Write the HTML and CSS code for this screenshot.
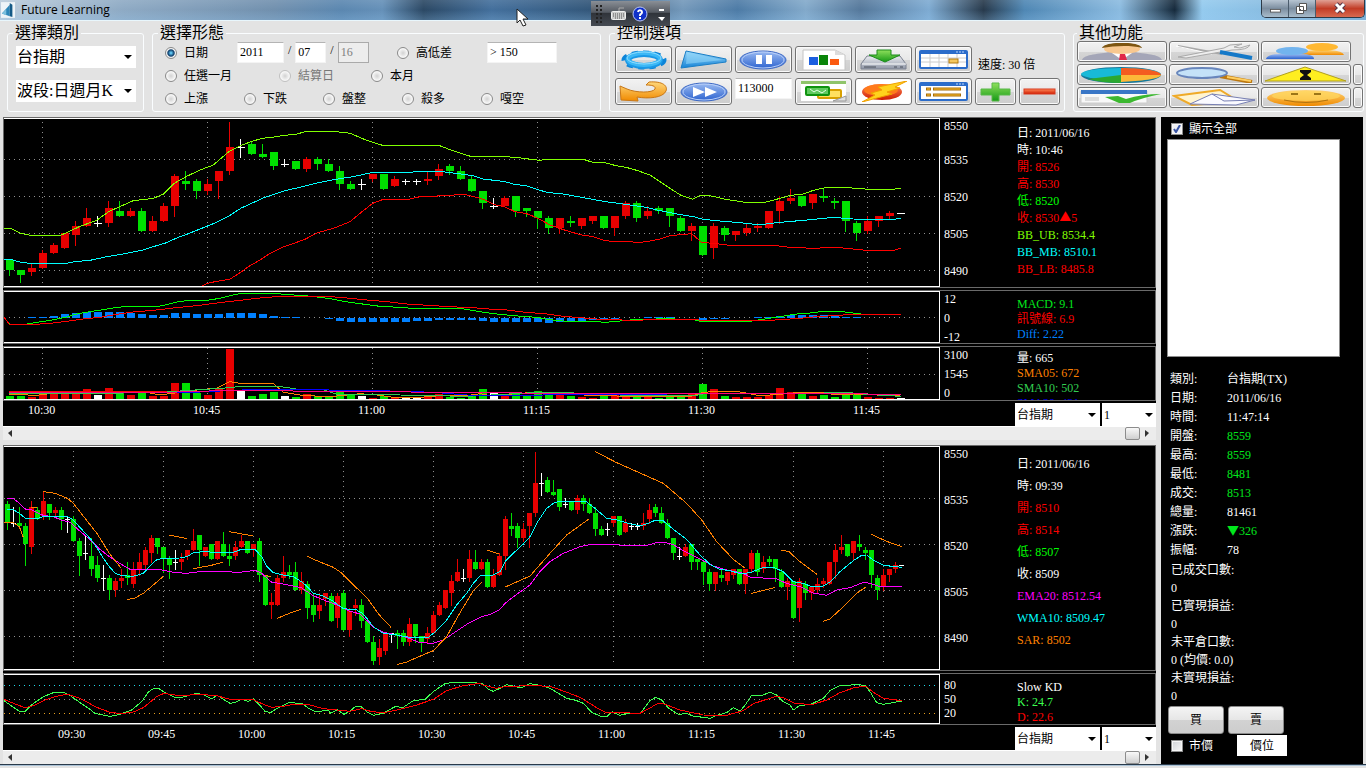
FILE: index.html
```html
<!DOCTYPE html>
<html lang="zh-Hant">
<head>
    <meta charset="UTF-8">
    <title>Future Learning</title>
    <link rel="stylesheet" href="styles.css">
</head>
<body>
<svg class="defs" width="0" height="0" aria-hidden="true">
    <defs>
        <linearGradient id="blue" x1="0" y1="0" x2="0" y2="1"><stop offset="0" stop-color="#9cd8fb"/><stop offset="1" stop-color="#1583d6"/></linearGradient>
        <linearGradient id="royal" x1="0" y1="0" x2="0" y2="1"><stop offset="0" stop-color="#9dbcf2"/><stop offset="1" stop-color="#2b62cf"/></linearGradient>
        <linearGradient id="orange" x1="0" y1="0" x2="0" y2="1"><stop offset="0" stop-color="#ffd77a"/><stop offset="1" stop-color="#f08a00"/></linearGradient>
        <linearGradient id="green" x1="0" y1="0" x2="0" y2="1"><stop offset="0" stop-color="#8fe05c"/><stop offset="1" stop-color="#169a16"/></linearGradient>
        <linearGradient id="red" x1="0" y1="0" x2="0" y2="1"><stop offset="0" stop-color="#ff8a5a"/><stop offset="1" stop-color="#cf1c00"/></linearGradient>
        <linearGradient id="steel" x1="0" y1="0" x2="0" y2="1"><stop offset="0" stop-color="#eceef2"/><stop offset="1" stop-color="#8f96a6"/></linearGradient>
    </defs>
</svg>

<header class="titlebar">
    <svg class="app-icon" viewBox="0 0 16 18"><rect width="16" height="18" fill="#eef4f8"/><path d="M1 13 L10 3 V16 Z" fill="#2c86b8"/><path d="M10 1 L13 3 V17 L10 16 Z" fill="#155a86"/><path d="M1 13 L6 8 V15 Z" fill="#7cc0de"/></svg>
    <h1>Future Learning</h1>
    <div class="window-buttons">
        <button class="win" aria-label="minimize"><svg viewBox="0 0 29 17"><rect x="9.500" y="9.500" width="11" height="3" fill="#fff" stroke="#555"/></svg></button>
        <button class="win" aria-label="restore"><svg viewBox="0 0 26 17"><path d="M10.500 3.500h7v7h-7z M7.500 6.500h7v7h-7z" fill="#fff" stroke="#555"/><rect x="10" y="9" width="2" height="2" fill="#555"/></svg></button>
        <button class="win close" aria-label="close"><svg viewBox="0 0 48 17"><path d="M20 4 L28 12 M28 4 L20 12" stroke="#534" stroke-width="5"/><path d="M20 4 L28 12 M28 4 L20 12" stroke="#fff" stroke-width="3"/></svg></button>
    </div>
    <div class="langbar">
        <svg viewBox="0 0 79 25">
            <g stroke="#222" stroke-width="2" stroke-dasharray="2 2"><path d="M5 5h8M5 9h8M5 13h8M5 17h8M5 21h8"/></g>
            <rect x="20.500" y="10.500" width="14" height="8" rx="1" fill="#ccc" stroke="#eee"/>
            <path d="M22 13h11M22 15h11M24 17h7" stroke="#555" stroke-dasharray="1 1"/><path d="M28 10V7h5" stroke="#aaa" fill="none"/>
            <circle cx="49" cy="13" r="7" fill="#1030c8" stroke="#b8c4f4"/>
            <path d="M47 11 a2 2 0 1 1 3 2 q-1 0 -1 2 M49 16v2" stroke="#fff" stroke-width="2" fill="none"/>
            <path d="M68 8h5v2h-5z M67 16h7l-3 4z" fill="#fff"/>
        </svg>
    </div>
    <svg class="pointer" viewBox="0 0 13 19"><path d="M1 1V15L4 12L7 18L10 17L7 11H12Z" fill="#fff" stroke="#222"/></svg>
</header>

<form class="toolbar">
    <fieldset class="category">
        <legend>選擇類別</legend>
        <select aria-label="類別"><option>台指期</option></select>
        <select aria-label="波段"><option>波段:日週月K</option></select>
    </fieldset>

    <fieldset class="pattern">
        <legend>選擇形態</legend>
        <div class="row row-date">
            <label><input type="radio" name="mode" checked>日期</label>
            <div class="date">
                <input type="text" class="year" value="2011" aria-label="年"><span>/</span>
                <input type="text" value="07" aria-label="月"><span>/</span>
                <input type="text" value="16" aria-label="日" disabled>
            </div>
            <label><input type="radio" name="mode">高低差</label>
            <input type="text" value="&gt; 150" aria-label="高低差">
        </div>
        <div class="row row-month">
            <label><input type="radio" name="mode">任選一月</label>
            <label class="off"><input type="radio" name="mode" disabled>結算日</label>
            <label><input type="radio" name="mode">本月</label>
        </div>
        <div class="row row-trend">
            <label><input type="radio" name="mode">上漲</label>
            <label><input type="radio" name="mode">下跌</label>
            <label><input type="radio" name="mode">盤整</label>
            <label><input type="radio" name="mode">殺多</label>
            <label><input type="radio" name="mode">嘎空</label>
        </div>
    </fieldset>

    <fieldset class="control">
        <legend>控制選項</legend>
        <div class="control-grid">
            <button type="button" aria-label="設定"><svg viewBox="0 0 51 21"><ellipse cx="26" cy="11" rx="20" ry="7" fill="none" stroke="#0c84d8" stroke-width="5" stroke-dasharray="6 5"/><ellipse cx="26" cy="11" rx="16" ry="6" fill="none" stroke="#1a98e6" stroke-width="6"/><ellipse cx="26" cy="10" rx="16" ry="6" fill="none" stroke="#3cb8f6" stroke-width="4"/><ellipse cx="26" cy="9" rx="17" ry="6" fill="none" stroke="#8cdcff" stroke-width="1"/></svg></button>
            <button type="button" aria-label="播放"><svg viewBox="0 0 51 21"><path d="M8 2 L48 10 V13 L3 19 Z" fill="url(#blue)" stroke="#1b7fc6"/><path d="M9 3 L45 11 L8 15 Z" fill="#8fd6f8" opacity=".6"/></svg></button>
            <button type="button" aria-label="暫停"><svg viewBox="0 0 51 21"><ellipse cx="25" cy="11" rx="23" ry="9" fill="url(#royal)" stroke="#3c68c4"/><ellipse cx="25" cy="11" rx="21" ry="8" fill="none" stroke="#b9cff8"/><path d="M18 6h6v9h-6zM28 6h6v9h-6z" fill="#fff"/></svg></button>
            <button type="button" aria-label="統計"><svg viewBox="0 0 51 21"><path d="M5 1h32l10 5v15H5z" fill="#fff" stroke="#c4c4c4"/><path d="M37 1v5h10z" fill="#ddd"/><rect x="11" y="8" width="9" height="8" fill="#1c5fe0"/><rect x="21" y="6" width="9" height="10" fill="#0a850a"/><rect x="32" y="10" width="9" height="6" fill="#fb5a10"/></svg></button>
            <button type="button" aria-label="下載"><svg viewBox="0 0 51 21"><path d="M9 7h33l6 8v5H3v-5z" fill="url(#steel)" stroke="#7c8290"/><path d="M4 15h44" stroke="#fff"/><path d="M6 18h12M36 18h3M42 18h3" stroke="#4a505c"/><path d="M19 1h14v5h9L27 13L11 6h8z" fill="url(#green)" stroke="#1c8c1c"/></svg></button>
            <button type="button" aria-label="日曆"><svg viewBox="0 0 51 21"><rect x="1" y="1" width="49" height="19" rx="2" fill="#2b6cca"/><path d="M3 5h45v13H3z" fill="#fff"/><path d="M3 9h45M3 13h45M12 5v13M21 5v13M30 5v13M39 5v13" stroke="#ccc"/><rect x="31" y="10" width="9" height="4" fill="#f4c860" stroke="#b27a10"/><path d="M38 3h8" stroke="#bcd6fa" stroke-dasharray="2 1"/></svg></button>
            <span class="speed">速度: 30 倍</span>
            <button type="button" aria-label="返回"><svg viewBox="0 0 51 21"><path d="M2 5L9 8C18 12 35 12 37 8C38 5 34 4 28 4L31 1C45 0 50 5 48 10C45 17 30 18 19 16L20 20L3 19Z" fill="url(#orange)" stroke="#c87818"/></svg></button>
            <button type="button" aria-label="快轉"><svg viewBox="0 0 51 21"><ellipse cx="26" cy="11" rx="23" ry="9" fill="url(#royal)" stroke="#3c68c4"/><ellipse cx="26" cy="11" rx="21" ry="8" fill="none" stroke="#b9cff8"/><path d="M15 6l12 5l-12 5zM27 6l12 5l-12 5z" fill="#fff"/></svg></button>
            <input type="text" value="113000" aria-label="時間">
            <button type="button" aria-label="視窗"><svg viewBox="0 0 51 21"><path d="M3 0h45v20H3z" fill="#fff"/><path d="M3 0h45v3H3z" fill="#8fc46a"/><rect x="20" y="9" width="23" height="8" rx="1" fill="#ffe060" stroke="#d8a000" stroke-width="2"/><rect x="8" y="6" width="23" height="8" rx="1" fill="#5fca5f" stroke="#0f930f" stroke-width="2"/><path d="M12 8l4 3l3-2l5 3l4-3" stroke="#e4ffe4" fill="none"/><path d="M35 20l13-5v5z" fill="#e0e0e0" stroke="#999"/></svg></button>
            <button type="button" class="white" aria-label="閃電"><svg viewBox="0 0 51 21"><ellipse cx="24" cy="11" rx="20" ry="8" fill="url(#red)"/><ellipse cx="23" cy="9" rx="17" ry="6" fill="#ff7a1c"/><path d="M49 0L20 6L24 9L13 12L17 14L4 21L34 13L29 11L42 7L37 6Z" fill="#ffd21c" stroke="#f0a000"/></svg></button>
            <button type="button" aria-label="清單"><svg viewBox="0 0 51 21"><rect x="1" y="1" width="49" height="19" rx="2" fill="#2b6cca"/><path d="M3 5h45v13H3z" fill="#fff"/><path d="M8 8h5M8 14h5M15 8h28M15 14h28" stroke="#a86c08" stroke-width="3"/><path d="M9 8h3M9 14h3M16 8h26M16 14h26" stroke="#fcc030"/><path d="M38 3h8" stroke="#bcd6fa" stroke-dasharray="2 1"/></svg></button>
            <button type="button" aria-label="加速"><svg viewBox="0 0 35 21"><path d="M14 2h7v6h11v6h-11v6h-7v-6H3v-6h11z" fill="url(#green)" stroke="#58b848"/></svg></button>
            <button type="button" aria-label="減速"><svg viewBox="0 0 35 21"><rect x="2" y="8" width="31" height="5" fill="url(#red)" stroke="#d83a20"/></svg></button>
        </div>
    </fieldset>

    <fieldset class="others">
        <legend>其他功能</legend>
        <div class="others-grid">
            <button type="button" aria-label="使用者"><svg viewBox="0 0 84 17"><path d="M2 17C4 11 20 11 30 9H54C64 11 80 11 82 17Z" fill="#a4a6b8"/><path d="M32 10h20l-10 7z" fill="#fff"/><path d="M40 11h5l2 6h-8z" fill="#e02848"/><ellipse cx="42" cy="6" rx="18" ry="5" fill="#f8c890"/><path d="M22 5C24 -2 60 -2 62 5C50 2 34 3 22 5Z" fill="#7e5612"/></svg></button>
            <button type="button" aria-label="工具"><svg viewBox="0 0 84 17"><path d="M6 3L50 11" stroke="#a9a9a9" stroke-width="2"/><path d="M4 3L40 11" stroke="#fff"/><path d="M6 14L52 5L58 2L70 1L62 4L68 5L78 2Q76 7 60 7L14 15Z" fill="#eee" stroke="#aaa"/><path d="M48 9L80 15" stroke="#1579c8" stroke-width="4"/></svg></button>
            <button type="button" aria-label="群組"><svg viewBox="0 0 84 17"><path d="M35 12Q36 8 50 7H66Q79 8 80 12Z" fill="url(#orange)"/><ellipse cx="58" cy="4" rx="16" ry="4" fill="#ffb832"/><path d="M2 16Q3 11 17 11H36Q50 11 50 16Z" fill="url(#royal)"/><ellipse cx="28" cy="8" rx="16" ry="4" fill="#72b4ee"/></svg></button>
            <span></span>
            <button type="button" aria-label="圓餅圖"><svg viewBox="0 0 84 17"><ellipse cx="41" cy="9" rx="40" ry="8" fill="#14789a"/><ellipse cx="41" cy="8" rx="40" ry="6" fill="#18bad8"/><path d="M41 2C65 2 81 5 81 9H41Z" fill="#f45c20"/><path d="M41 9H81C80 13 60 15 41 16Z" fill="#fcb838"/><path d="M41 17V9L8 13Q22 17 41 17Z" fill="#2ca830"/></svg></button>
            <button type="button" aria-label="搜尋"><svg viewBox="0 0 84 17"><path d="M48 10L80 16" stroke="#bc7810" stroke-width="4"/><path d="M55 11L79 15" stroke="#ffce60" stroke-width="2"/><ellipse cx="30" cy="7" rx="25" ry="5" fill="#c4e2f8" stroke="#6886bc" stroke-width="2"/></svg></button>
            <button type="button" aria-label="警告"><svg viewBox="0 0 84 17"><path d="M41 1L82 15H1Z" fill="#ffee20" stroke="#b0a020"/><path d="M36 4h11v2l-4 3l4 3v2H36v-2l4-3l-4-3z" fill="#111"/></svg></button>
            <button type="button" aria-label="更多一"></button>
            <button type="button" aria-label="行程"><svg viewBox="0 0 84 17"><path d="M1 2h66v12H1z" fill="#f8f8f8" stroke="#ccc"/><path d="M1 1h66v4H1z" fill="#3976c6"/><path d="M5 8h14v4H5z" fill="#ddd"/><path d="M25 8L38 7L46 10Q62 5 81 5Q61 9 50 14H39Z" fill="#3cb830"/></svg></button>
            <button type="button" aria-label="郵件"><svg viewBox="0 0 84 17"><path d="M2 7L48 1L66 12L20 16Z" fill="#fff4d0" stroke="#efaa28" stroke-width="2"/><path d="M18 15L40 5L83 11L64 16Z" fill="#fafaff" stroke="#7880b4"/><path d="M40 5L52 12L83 11" fill="none" stroke="#7880b4"/></svg></button>
            <button type="button" aria-label="笑臉"><svg viewBox="0 0 84 17"><ellipse cx="42" cy="9" rx="39" ry="8" fill="url(#orange)"/><ellipse cx="42" cy="7" rx="34" ry="5" fill="#ffd860" opacity=".7"/><path d="M27 5h7M50 5h7" stroke="#9c7618" stroke-width="2"/><path d="M20 11Q42 16 64 11" fill="none" stroke="#b07410"/></svg></button>
            <button type="button" aria-label="更多二"></button>
        </div>
    </fieldset>
</form>

<main>
    <div class="charts">
        <section class="chart-block">
            <div class="pane price">
                <svg id="price" class="plot" viewBox="12 12 2805 501" preserveAspectRatio="none"></svg>
                <ol class="scale"><li>8550</li><li>8535</li><li>8520</li><li>8505</li><li>8490</li></ol>
                <ul class="values">
                    <li>日: 2011/06/16</li>
                    <li>時: 10:46</li>
                    <li class="red">開: 8526</li>
                    <li class="red">高: 8530</li>
                    <li class="lime">低: 8520</li>
                    <li class="red">收: 8530<span class="mark">▲</span>5</li>
                    <li class="chartreuse">BB_UB: 8534.4</li>
                    <li class="cyan">BB_MB: 8510.1</li>
                    <li class="red">BB_LB: 8485.8</li>
                </ul>
            </div>
            <div class="pane macd">
                <svg id="macd" class="plot" viewBox="12 21 2805 150" preserveAspectRatio="none"></svg>
                <ol class="scale"><li>12</li><li>0</li><li>-12</li></ol>
                <ul class="values">
                    <li class="green">MACD: 9.1</li>
                    <li class="red">訊號線: 6.9</li>
                    <li class="blue">Diff: 2.22</li>
                </ul>
            </div>
            <div class="pane volume">
                <svg id="volume" class="plot" viewBox="12 189 2805 153" preserveAspectRatio="none"></svg>
                <ol class="scale"><li>3100</li><li>1545</li><li>0</li></ol>
                <ul class="values">
                    <li>量: 665</li>
                    <li class="orange">SMA05: 672</li>
                    <li class="sea">SMA10: 502</li>
                    <li class="deep">SMA20: 431</li>
                </ul>
            </div>
            <div class="axis">
                <ol class="times wide"><li>10:30</li><li>10:45</li><li>11:00</li><li>11:15</li><li>11:30</li><li>11:45</li></ol>
                <select aria-label="商品"><option>台指期</option></select>
                <select class="period" aria-label="週期"><option>1</option></select>
            </div>
            <div class="scroller">
                <button aria-label="向左"><svg viewBox="0 0 5 7"><path d="M4 0V7L0 3Z"/></svg></button>
                <input type="range" value="100" aria-label="捲動">
                <button aria-label="向右"><svg viewBox="0 0 5 7"><path d="M0 0V7L4 3Z"/></svg></button>
            </div>
        </section>

        <section class="chart-block">
            <div class="pane day">
                <svg id="day" class="plot" viewBox="12 21 2805 666" preserveAspectRatio="none"></svg>
                <ol class="scale"><li>8550</li><li>8535</li><li>8520</li><li>8505</li><li>8490</li></ol>
                <ul class="values">
                    <li>日: 2011/06/16</li>
                    <li>時: 09:39</li>
                    <li class="red">開: 8510</li>
                    <li class="red">高: 8514</li>
                    <li class="lime">低: 8507</li>
                    <li>收: 8509</li>
                    <li class="magenta">EMA20: 8512.54</li>
                    <li class="cyan">WMA10: 8509.47</li>
                    <li class="orange">SAR: 8502</li>
                </ul>
            </div>
            <div class="pane kd">
                <svg id="kd" class="plot" viewBox="12 705 2805 144" preserveAspectRatio="none"></svg>
                <ol class="scale"><li>80</li><li>50</li><li>20</li></ol>
                <ul class="values">
                    <li>Slow KD</li>
                    <li class="mint">K: 24.7</li>
                    <li class="red">D: 22.6</li>
                </ul>
            </div>
            <div class="axis">
                <ol class="times narrow"><li>09:30</li><li>09:45</li><li>10:00</li><li>10:15</li><li>10:30</li><li>10:45</li><li>11:00</li><li>11:15</li><li>11:30</li><li>11:45</li></ol>
                <select aria-label="商品"><option>台指期</option></select>
                <select class="period" aria-label="週期"><option>1</option></select>
            </div>
            <div class="scroller">
                <button aria-label="向左"><svg viewBox="0 0 5 7"><path d="M4 0V7L0 3Z"/></svg></button>
                <input type="range" value="100" aria-label="捲動">
                <button aria-label="向右"><svg viewBox="0 0 5 7"><path d="M0 0V7L4 3Z"/></svg></button>
            </div>
        </section>
    </div>

    <aside class="side">
        <label class="check"><input type="checkbox" checked>顯示全部</label>
        <select class="list" size="10" aria-label="清單"></select>
        <table>
            <tr><th scope="row">類別:</th><td>台指期(TX)</td></tr>
            <tr><th scope="row">日期:</th><td>2011/06/16</td></tr>
            <tr><th scope="row">時間:</th><td>11:47:14</td></tr>
            <tr><th scope="row">開盤:</th><td class="green">8559</td></tr>
            <tr><th scope="row">最高:</th><td class="green">8559</td></tr>
            <tr><th scope="row">最低:</th><td class="green">8481</td></tr>
            <tr><th scope="row">成交:</th><td class="green">8513</td></tr>
            <tr><th scope="row">總量:</th><td>81461</td></tr>
            <tr><th scope="row">漲跌:</th><td class="green"><span class="mark">▼</span>326</td></tr>
            <tr><th scope="row">振幅:</th><td>78</td></tr>
        </table>
        <dl>
            <dt>已成交口數:</dt><dd>0</dd>
            <dt>已實現損益:</dt><dd>0</dd>
            <dt>未平倉口數:</dt><dd>0 (均價: 0.0)</dd>
            <dt>未實現損益:</dt><dd>0</dd>
        </dl>
        <div class="order">
            <button>買</button>
            <button>賣</button>
        </div>
        <div class="order-type">
            <label class="check"><input type="checkbox">市價</label>
            <button>價位</button>
        </div>
    </aside>
</main>
<footer class="edge"></footer>
<script src="chart.js"></script>
</body>
</html>
```

FILE: styles.css
```css
* {
    box-sizing: border-box;
}

body {
    margin: 0;
    background: #e3e3e3;
    font-family: "Liberation Serif", "Noto Sans CJK TC", serif;
    font-size: 12px;
    line-height: 16px;
    color: #000;
}

ul, ol, dl, dd {
    list-style: none;
    margin: 0;
    padding: 0;
}

button, input, select {
    font: inherit;
    margin: 0;
}

.defs {
    position: absolute;
}

/* title bar */

.titlebar {
    position: relative;
    display: flex;
    align-items: center;
    height: 21px;
    padding-left: 1px;
    border-bottom: 1px solid #e8f6fc;
    background:
        linear-gradient(rgba(255, 255, 255, 0.1), rgba(0, 0, 0, 0) 50%, rgba(150, 200, 240, 0.25)),
        linear-gradient(90deg, #bccddc, #8eaac4 9%, #7190ae 20%, #5b87b0 25%, #6590b8 28%, #2b4864 31%, #436f9c 36%, #315476 44%, #7398ba 50%, #4d7ba6 54%, #82a9ca 59%, #55789b 63%, #7eabd2 68%, #27394b 72%, #4f87b4 75%, #8bbbe0 82%, #15293b 86%, #94caee 88%, #77a9cf);
}

.app-icon {
    width: 14px;
    height: 16px;
}

.titlebar h1 {
    margin: 0 0 0 6px;
    font: 12px/20px "Open Sans", sans-serif;
}

.window-buttons {
    display: flex;
    align-self: flex-start;
    margin: 0 1px 0 auto;
    border: 1px solid #2c3a48;
    border-top: 0;
    border-radius: 0 0 5px 5px;
    overflow: hidden;
}

.win {
    width: 27px;
    height: 17px;
    padding: 0;
    border: 0;
    border-right: 1px solid #4b5c6c;
    background: linear-gradient(#b7c5d2, #7c8ea0 50%, #a9bccb);
}

.win svg {
    display: block;
    width: 100%;
    height: 100%;
}

.win.close {
    width: 48px;
    border-right: 0;
    background: linear-gradient(#e0a094, #c23c26 50%, #d86a50);
}

.langbar {
    position: absolute;
    left: 591px;
    top: 1px;
    width: 79px;
    height: 25px;
    background: linear-gradient(#8a8f96, #555a62 45%, #30343a 50%, #454a52);
    z-index: 1;
}

.pointer {
    position: absolute;
    left: 516px;
    top: 8px;
    width: 13px;
    height: 19px;
    z-index: 1;
}

/* toolbar */

.toolbar {
    display: flex;
    gap: 8px;
    height: 96px;
    padding: 4px 2px 5px 7px;
}

fieldset {
    margin: 0;
    min-width: 0;
    padding: 0 5px;
    border: 1px solid #fafdff;
    border-radius: 3px;
}

legend {
    padding: 0 2px;
    font-size: 16px;
    line-height: 16px;
}

select {
    appearance: none;
    border: 0;
    border-radius: 0;
    background: #fff url("data:image/svg+xml,%3Csvg xmlns='http://www.w3.org/2000/svg' width='8' height='4'%3E%3Cpath d='M0 0H8L4 4Z'/%3E%3C/svg%3E") no-repeat right 4px center;
    color: #000;
}

.category {
    width: 137px;
}

.category select {
    display: block;
    width: 120px;
    height: 22px;
    margin: 5px 0 12px 3px;
    padding: 0 1px;
    font-size: 16px;
}

.pattern {
    flex: 1;
}

.row {
    display: grid;
    align-items: center;
    height: 23px;
    padding-left: 7px;
}

.row-date {
    grid-template-columns: 72px 160px 90px 70px;
}

.row-month {
    grid-template-columns: 114px 92px auto;
}

.row-trend {
    grid-template-columns: repeat(5, 79px);
}

.row label {
    display: flex;
    align-items: center;
    gap: 7px;
}

.row .off {
    color: #777;
}

input[type="radio"] {
    appearance: none;
    width: 12px;
    height: 12px;
    border: 1px solid #8a8a8a;
    border-radius: 50%;
    background: radial-gradient(#d2d2d2, #f6f6f6 60%);
}

input[type="radio"]:checked {
    background: radial-gradient(#5cc0ec 10%, #0c3a68 45%, #f4f4f4 60%);
}

input[type="radio"]:disabled {
    border-color: #c0c0c0;
}

input[type="text"] {
    width: 100%;
    height: 21px;
    padding: 0 2px;
    border: 1px solid #f4f4f4;
    border-top-color: #b4b4b4;
    background: #fff;
}

.date {
    display: flex;
    gap: 4px;
}

.date input[type="text"] {
    width: 31px;
}

.date input.year {
    width: 47px;
}

.date input:disabled {
    border-color: #aaa;
    background: #ededed;
    color: #808080;
}

.control {
    width: 456px;
}

.control-grid {
    display: grid;
    grid-template-columns: repeat(6, 57px) 41px 41px;
    grid-auto-rows: 27px;
    gap: 5px 3px;
    padding-top: 5px;
}

.control-grid button, .others-grid button {
    padding: 2px;
    border: 1px solid #737373;
    border-radius: 3px;
    background: linear-gradient(#f2f2f2, #e8e8e8 50%, #d6d6d6 52%, #cdcdcd);
    box-shadow: inset 0 0 0 1px #fafafa;
}

.control-grid .white {
    background: #fff;
}

.toolbar button svg {
    display: block;
    width: 100%;
    height: 100%;
}

.speed {
    grid-column: span 2;
    align-self: center;
    padding: 10px 0 0 3px;
}

.others {
    width: 291px;
    padding: 0 3px;
}

.others-grid {
    display: grid;
    grid-template-columns: repeat(3, 90px) 10px;
    grid-auto-rows: 21px;
    gap: 2px;
}

.others-grid button {
    padding: 1px 2px;
}

/* charts */

main {
    display: flex;
    gap: 5px;
    padding: 0 3px;
}

.charts {
    flex: 1;
    display: flex;
    flex-direction: column;
    gap: 5px;
    min-width: 0;
}

.chart-block {
    background: #000;
    color: #fff;
}

.pane {
    display: flex;
    margin-bottom: 2px;
    border: 1px solid #6a6a6a;
    overflow: hidden;
}

.volume, .kd {
    margin-bottom: 0;
}

.plot {
    flex: 1;
    min-width: 0;
    border: 1px solid #fff;
    border-left: 0;
    shape-rendering: crispEdges;
}

.price {
    height: 171px;
}

.macd {
    height: 54px;
}

.volume {
    height: 55px;
}

.day {
    height: 226px;
}

.kd {
    height: 52px;
}

.scale {
    width: 75px;
    padding-left: 4px;
}

.scale li {
    height: 37px;
}

.price .scale li:first-child {
    height: 34px;
}

.day .scale li {
    height: 46px;
}

.macd .scale li, .volume .scale li {
    height: 19px;
}

.kd .scale {
    padding-top: 3px;
}

.kd .scale li {
    height: 14px;
}

.values {
    width: 140px;
    padding: 7px 0 0 2px;
    line-height: 17px;
}

.macd .values, .volume .values, .kd .values {
    padding-top: 6px;
    line-height: 15px;
}

.volume .values {
    padding-top: 4px;
}

.day .values {
    line-height: 22px;
}

.mark {
    font-family: "Noto Sans CJK TC", sans-serif;
    line-height: 1;
}

.red { color: #f00; }
.lime { color: #0f0; }
.green { color: #00e81c; }
.chartreuse { color: #80ff00; }
.cyan { color: #00ffff; }
.blue { color: #0080ff; }
.orange { color: #ff8000; }
.sea { color: #32cd50; }
.deep { color: #00f; }
.magenta { color: #f0f; }
.mint { color: #3cff50; }

.axis {
    display: flex;
    gap: 2px;
    height: 25px;
    padding-top: 2px;
}

.times {
    flex: 1;
    display: flex;
    min-width: 0;
    overflow: hidden;
    line-height: 14px;
}

.times li {
    flex: none;
    width: 165px;
}

.wide {
    padding-left: 25px;
}

.narrow {
    padding-left: 55px;
}

.narrow li {
    width: 90px;
}

.axis select {
    width: 85px;
    padding: 0 2px;
}

.axis .period {
    width: 54px;
    background-position: right 3px center;
}

.scroller {
    display: flex;
    height: 14px;
    border-top: 1px solid #fff;
    background: #ececec;
}

.scroller button {
    width: 16px;
    padding: 0 5px;
    border: 0;
    background: none;
}

.scroller button svg {
    display: block;
    width: 5px;
    height: 7px;
    fill: #333;
}

.scroller input {
    flex: 1;
    appearance: none;
    height: 13px;
    background: none;
}

.scroller input::-webkit-slider-thumb {
    appearance: none;
    width: 15px;
    height: 13px;
    border: 1px solid #8c8c8c;
    border-radius: 2px;
    background: linear-gradient(#f8f8f8, #e4e4e4 50%, #cfcfcf);
}

/* side panel */

.side {
    width: 202px;
    padding: 3px 6px 0;
    background: #000;
    color: #fff;
}

.check {
    display: flex;
    align-items: center;
    gap: 6px;
    height: 17px;
    padding-left: 4px;
}

.check input {
    appearance: none;
    width: 12px;
    height: 12px;
    border: 1px solid #8e8f8f;
    background: linear-gradient(135deg, #cfd2d6, #f8f8f8);
    box-shadow: inset 0 0 0 1px #f6f6f6;
}

.check input:checked {
    background: url("data:image/svg+xml,%3Csvg xmlns='http://www.w3.org/2000/svg' viewBox='0 0 10 10'%3E%3Cpath d='M2 5L4 8L8 1' fill='none' stroke='%233a55a4' stroke-width='2'/%3E%3C/svg%3E") #eef0f4;
}

.list {
    display: block;
    width: 173px;
    height: 218px;
    margin-top: 2px;
    border: 1px solid #8c8c8c;
    background: #fff;
}

.side table {
    margin: 12px 0 0 1px;
    border-collapse: collapse;
}

.side th, .side td {
    height: 19px;
    padding: 0;
    line-height: 16px;
    text-align: left;
    font-weight: normal;
}

.side th {
    width: 59px;
    padding-left: 2px;
}

.side dl {
    margin-top: 2px;
    padding-left: 4px;
    line-height: 18px;
}

.order {
    display: flex;
    gap: 4px;
    padding: 1px 1px 0;
}

.order button {
    width: 56px;
    height: 28px;
    border: 1px solid #8a8a8a;
    border-radius: 3px;
    background: linear-gradient(#f4f4f4, #e6e6e6 50%, #d2d2d2 52%, #cdcdcd);
}

.order-type {
    display: flex;
    align-items: center;
    gap: 24px;
    padding-top: 1px;
}

.order-type button {
    width: 50px;
    height: 21px;
    padding: 0;
    border: 0;
    background: #fff;
}

.edge {
    height: 2px;
    border-top: 1px solid #2a3a4a;
    background: #a8c0d4;
}
```

FILE: chart.js
```javascript
// One-minute bars from 09:19, points above 8500: open, high, low, close
const bars = [
    [33,34,25,27],[27,32,26,27],[27,32,26,26],[26,27,13,20],[19,34,17,32],[31,32,28,28],[29,37,28,34],[33,33,28,30],
    [30,32,29,31],[31,32,25,28],[28,29,24,28],[28,29,21,21],[21,22,10,16],[17,23,15,17],[16,22,10,12],[13,16,8,9],
    [9,13,5,9],[9,10,2,5],[5,9,3,8],[8,12,6,9],[10,14,7,9],[7,14,6,12],[12,17,10,14],[13,19,12,18],
    [17,23,14,22],[22,22,17,19],[19,19,11,15],[15,16,9,13],[14,18,12,14],[14,17,12,15],[16,18,15,18],[18,25,18,21],
    [23,23,13,18],[16,19,16,19],[20,20,15,15],[15,21,15,21],[20,24,16,16],[16,20,13,15],[16,21,15,19],[19,23,19,21],
    [21,21,17,17],[18,20,16,20],[21,22,8,10],[10,10,0,0],[0,4,-4,1],[0,10,0,9],[9,16,8,11],[11,13,9,10],
    [11,14,5,5],[5,11,4,8],[7,8,-4,-1],[0,4,-5,-3],[-2,4,-4,0],[2,4,0,4],[3,4,-5,-5],[-4,4,-7,3],
    [4,5,-8,-8],[-8,-1,-10,-2],[-1,2,-3,0],[0,2,-7,-5],[-5,-5,-12,-12],[-12,-10,-19,-18],[-17,-11,-19,-14],[-15,-9,-16,-9],
    [-9,-9,-12,-9],[-9,-8,-14,-10],[-9,-8,-13,-12],[-12,-4,-13,-6],
    [-6,-6,-12,-10],[-10,-10,-15,-12],[-11,-7,-12,-9],[-9,-2,-9,-3],[-3,1,-3,0],[-1,5,-1,5],[4,10,0,8],[8,15,8,11],
    [9,12,8,9],[9,18,8,15],[14,18,12,12],[12,15,12,14],[14,15,6,6],[6,12,6,10],[10,17,10,16],[16,29,12,28],
    [26,30,23,25],[26,27,19,22],[22,27,21,25],[26,30,19,30],[30,50,29,40],[40,43,36,40],[41,42,37,37],[37,41,36,36],
    [38,38,31,32],[33,35,32,33],[34,34,31,31],[31,36,30,35],[35,36,31,33],[33,35,30,30],[30,32,23,25],[25,26,23,23],
    [25,27,23,25],[27,29,26,29],[29,29,23,23],[24,28,24,27],[26,27,25,26],[26,27,25,26],[26,30,25,27],[28,33,27,31],
    [32,33,29,30],[30,32,27,27],[27,28,22,22],[22,22,15,17],[16,19,15,16],[16,20,16,19],[20,20,12,14],[15,15,12,14],
    [14,14,7,11],[11,12,5,7],[7,11,5,11],[10,12,8,9],[8,11,7,11],[10,12,9,12],[12,12,7,7],[7,12,4,12],
    [12,18,11,17],[17,18,10,11],[12,16,11,14],[15,16,13,14],[15,15,8,12],[11,12,6,6],[6,9,2,8],[8,8,-4,-4],
    [-1,9,-5,8],[7,8,2,4],[4,6,2,6],[5,9,4,7],[7,9,6,8],[7,14,7,14],[14,20,9,18],[18,23,17,19],
    [20,20,16,16],[17,21,15,21],[20,23,18,19],[18,19,15,17],[18,18,6,10],[9,10,2,5],[6,12,5,10],[10,12,8,12],
    [12,14,11,13],[13,13,13,13]
];

const macdBars = [0,0,1,3,7,13,16,19,19,19,19,14,13,10,10,16,16,13,13,13,16,16,16,13,7,4,1,0,0,-3,-9,-12,-12,-12,-12,-12,-12,-9,-9,-6,-6,-6,-6,-9,-12,-12,-12,-12,-12,-15,-12,-9,-9,-6,-3,-2,0,0,2,2,2,0,0,-6,-3,-2,0,0,2,4,7,10,10,10,10,10,4,1];

const volumes = [9,9,6,21,24,18,21,30,12,33,24,12,21,9,9,48,48,18,12,30,150,24,9,15,21,9,6,15,9,6,24,12,9,3,9,6,3,3,12,15,6,3,12,30,18,12,21,9,24,21,15,9,6,3,9,15,15,9,6,3,12,9,15,45,30,9,6,6,6,12,33,21,15,9,12,6,18,18,6,3,3,3];

const NS = 'http://www.w3.org/2000/svg';
const RED = '#e80000';
const GREEN = '#00e000';
// three viewBox units to a pixel
const snap = v => Math.round(v / 3) * 3;

function add(svg, name, attrs) {
    const el = document.createElementNS(NS, name);
    for (const key in attrs) el.setAttribute(key, attrs[key]);
    svg.appendChild(el);
}

function rect(svg, x, y, width, height, fill) {
    add(svg, 'rect', {x, y, width, height, fill});
}

function line(svg, stroke, points) {
    add(svg, 'polyline', {points, stroke, 'stroke-width': 3, fill: 'none'});
}

function hGrid(svg, y, color = '#909090') {
    for (let x = 12; x < 2805; x += 15) rect(svg, x, snap(y), 3, 3, color);
}

function vGrid(svg, x, from, to) {
    for (let y = from; y < to; y += 15) rect(svg, x, y, 3, 3, '#909090');
}

function color([open, , , close]) {
    if (open === close) return '#fff';
    return close > open ? RED : GREEN;
}

function candles(svg, data, first, pitch, width, toY) {
    data.forEach((bar, i) => {
        const [open, high, low, close] = bar;
        const mid = first + i * pitch;
        const left = mid - (width === 24 ? 9 : 6);
        const top = snap(toY(Math.max(open, close)));
        const bottom = snap(toY(Math.min(open, close)));
        const wickTop = snap(toY(high));
        rect(svg, mid, wickTop, 3, snap(toY(low)) - wickTop + (high === low ? 0 : 3), color(bar));
        rect(svg, left, top, width, Math.max(bottom - top, 3), color(bar));
    });
}

const recent = bars.slice(68);
const quarters = [126, 621, 1116, 1611, 2106, 2601];

// price with Bollinger bands
const price = document.getElementById('price');
quarters.forEach(x => vGrid(price, x, 21, 510));
[132, 243, 354, 465].forEach(y => hGrid(price, y));
candles(price, recent, 27, 33, 24, p => 243 + (20 - p) * 7.4);
line(price, '#80ff00', '12,340 33,340 62,355 92,361 182,361 210,348 240,334 290,316 326,290 359,275 400,257 460,250 491,237 524,204 560,184 600,165 640,150 689,108 722,92 755,79 788,70 821,66 854,61 887,58 920,49 1000,49 1052,55 1085,70 1118,82 1148,91 1316,91 1350,104 1382,115 1412,124 1500,124 1556,128 1600,134 1620,136 1640,133 1750,133 1778,142 1815,143 1844,151 1882,158 1910,166 1950,180 1980,200 2010,220 2043,241 2078,253 2100,241 2115,240 2145,245 2175,253 2205,257 2235,262 2295,262 2340,250 2372,241 2410,237 2440,226 2472,219 2500,217 2585,220 2600,223 2680,223 2703,219');
line(price, '#00ffff', '12,433 33,433 62,442 90,445 200,445 225,440 270,436 320,425 370,417 430,405 460,395 500,383 530,369 560,358 600,342 650,322 689,302 722,280 755,265 790,249 830,235 870,223 900,217 950,204 1000,194 1060,185 1118,172 1230,172 1260,169 1320,169 1350,173 1382,177 1420,182 1450,192 1515,200 1540,207 1580,213 1640,232 1690,237 1750,248 1810,259 1870,267 1940,277 1980,287 2030,297 2080,305 2110,313 2170,319 2220,323 2265,328 2290,328 2340,322 2410,316 2500,307 2560,312 2610,313 2680,313 2703,310');
line(price, '#f00', '605,513 622,505 650,499 689,493 720,473 750,452 780,435 810,415 850,396 915,373 950,354 1000,340 1050,320 1085,291 1118,265 1150,253 1225,253 1260,245 1340,242 1382,238 1400,240 1430,247 1453,254 1480,268 1515,276 1545,290 1580,296 1610,308 1650,330 1690,344 1740,359 1780,365 1810,375 1840,380 1890,380 1915,383 1950,378 1980,372 2010,362 2075,356 2105,382 2150,386 2190,391 2320,391 2370,397 2440,400 2480,398 2520,398 2560,402 2600,406 2680,406 2703,400');

// MACD
const macd = document.getElementById('macd');
hGrid(macd, 96);
macdBars.forEach((v, i) => {
    const h = Math.max(snap(Math.abs(v)), 3);
    if (v) rect(macd, 18 + i * 33, v > 0 ? 99 - h : 99, 24, h, '#0080ff');
});
line(macd, '#0f0', '12,97 28,117 80,117 105,113 150,106 200,96 230,87 270,80 310,74 340,69 380,64 475,64 500,59 530,51 560,47 620,46 660,40 690,32 722,25 825,25 850,28 915,32 960,37 990,41 1030,49 1080,56 1140,64 1200,67 1250,71 1385,71 1440,80 1480,86 1540,92 1610,97 1650,104 1700,109 1780,109 1815,112 1860,108 1900,104 1960,104 1975,100 2020,100 2030,104 2080,104 2110,111 2150,109 2250,109 2300,101 2340,95 2390,87 2430,84 2470,79 2520,79 2550,83 2590,88');
line(macd, '#f00', '12,97 28,118 105,118 150,115 200,109 250,102 300,97 350,88 400,81 460,76 520,69 590,62 650,54 720,46 780,39 830,35 980,34 1030,38 1090,44 1160,50 1220,57 1300,62 1370,66 1410,67 1450,71 1520,75 1570,81 1640,87 1690,94 1740,98 1800,103 1900,106 1960,104 2080,104 2130,107 2300,107 2340,104 2400,100 2450,95 2500,92 2560,88 2703,88');

// volume and its averages
const volume = document.getElementById('volume');
quarters.forEach(x => vGrid(volume, x, 189, 342));
hGrid(volume, 267);
volumes.forEach((v, i) => rect(volume, 18 + i * 33, 342 - v, 24, v, color(recent[i])));
line(volume, '#ff8000', '28,328 110,331 150,326 280,322 350,325 430,320 480,330 540,322 600,314 650,310 689,290 720,295 820,296 850,322 900,330 960,334 1000,334 1080,326 1130,330 1180,337 1260,337 1320,332 1400,332 1440,326 1470,332 1600,322 1750,330 1850,333 2075,333 2110,322 2150,319 2220,321 2280,332 2340,328 2400,322 2480,322 2500,330 2560,327 2700,333');
line(volume, '#32cd50', '28,325 340,325 540,318 690,308 720,304 850,306 900,314 970,314 1010,328 1200,330 1400,334 1600,323 1700,323 1850,330 2090,331 2120,325 2440,325 2540,322 2600,328 2703,334');
line(volume, '#00f', '28,322 170,321 270,319 400,322 540,324 660,318 750,314 870,314 1100,316 1240,320 1300,322 1400,330 1560,332 1700,328 2000,327 2110,326');
line(volume, '#f00', '28,320 500,320');
line(volume, '#ff0080', '28,323 500,323 560,319 700,317 1230,320 1240,323 1500,322 1600,325 2600,327 2703,329');

// whole day with EMA, WMA and SAR
const day = document.getElementById('day');
for (let x = 219; x < 2805; x += 270) vGrid(day, x, 33, 670);
[174, 312, 450, 588].forEach(y => hGrid(day, y));
candles(day, bars, 21, 18, 15, p => 174 + (35 - p) * 9.2);
line(day, '#f0f', '22,175 40,175 58,190 76,207 94,209 112,218 130,226 160,230 184,240 210,247 238,272 256,287 274,303 300,328 328,350 364,373 390,388 410,390 480,389 520,397 560,400 600,395 650,394 720,397 765,391 785,400 814,426 860,434 904,443 940,467 976,482 1012,495 1048,513 1080,522 1102,543 1120,562 1150,577 1190,585 1220,592 1260,608 1300,610 1330,600 1360,580 1400,553 1445,530 1470,523 1500,508 1515,490 1550,463 1590,435 1620,395 1650,365 1690,340 1740,320 1770,314 1940,316 1970,308 1998,308 2020,314 2050,332 2100,357 2140,378 2180,390 2230,400 2250,411 2330,417 2360,430 2400,440 2440,459 2480,466 2510,450 2550,443 2590,427 2610,430 2640,440 2705,440');
line(day, '#00ffff', '22,209 40,209 58,220 76,235 94,236 112,236 130,230 160,228 200,228 220,240 256,280 274,300 292,325 310,355 328,380 346,400 364,407 400,409 430,400 454,373 472,358 500,355 540,354 562,350 580,338 610,335 650,337 700,337 724,328 765,328 785,350 800,378 820,398 850,405 880,410 904,425 922,440 940,460 970,468 1000,484 1030,506 1070,510 1090,522 1120,560 1150,580 1190,585 1230,592 1285,592 1310,572 1340,540 1370,495 1400,460 1420,430 1440,408 1480,405 1500,395 1515,365 1545,335 1570,312 1590,290 1610,250 1640,205 1665,187 1690,183 1740,183 1760,186 1785,205 1820,235 1850,240 1885,250 1920,258 1945,250 1965,241 1990,243 2020,268 2060,298 2100,345 2130,373 2160,388 2190,392 2220,401 2250,398 2290,382 2320,382 2350,395 2380,425 2410,430 2430,438 2465,441 2490,426 2520,395 2560,362 2585,346 2600,345 2620,360 2650,376 2705,382');
[
    '12,247 40,248 58,260 70,292',
    '94,202 112,202',
    '130,155 166,160 202,175 220,190 256,236 292,282 328,340 364,385',
    '382,479 405,474 430,460 460,435 490,409',
    '508,285 562,296',
    '580,386 634,376 670,366',
    '688,275 760,288',
    '796,407 814,409',
    '832,535 868,520 904,508',
    '922,349 955,364 1000,382 1025,399 1066,440 1102,475 1138,525 1174,563',
    '1192,673 1220,666 1280,640 1300,632 1340,590 1380,518 1420,452 1445,428',
    '1462,331 1496,341',
    '1516,441 1590,408 1650,340 1700,285 1768,236',
    '1786,35 1850,68 1940,108 1990,130 2060,190 2105,240 2150,305 2200,358 2235,384',
    '2254,460 2326,442',
    '2344,331 2366,334 2400,365 2452,404',
    '2470,544 2490,537 2530,500 2570,460 2597,442',
    '2614,283 2660,304 2705,320'
].forEach(points => line(day, '#ff8000', points));

// slow KD
const kd = document.getElementById('kd');
hGrid(kd, 735, '#20d8e8');
hGrid(kd, 777);
hGrid(kd, 819, '#e8a020');
line(kd, '#3cff50', '12,782 40,802 60,815 76,814 94,795 130,770 160,758 190,757 210,766 240,788 270,808 285,820 330,829 360,823 395,810 425,785 445,756 460,746 475,745 495,758 525,772 545,772 590,760 615,766 635,776 652,766 670,778 690,790 705,788 725,778 745,784 760,776 780,796 795,814 812,818 830,806 865,788 905,790 925,804 945,815 985,811 992,820 1012,809 1032,823 1050,813 1066,800 1084,800 1100,815 1120,826 1150,820 1185,800 1210,802 1240,782 1275,778 1300,755 1335,731 1360,727 1420,727 1450,732 1465,748 1480,754 1500,745 1520,734 1555,742 1570,741 1590,731 1620,736 1650,745 1700,775 1730,782 1750,790 1775,817 1800,828 1820,830 1838,815 1860,826 1885,820 1920,820 1930,808 1950,782 1967,772 1985,780 2005,804 2035,823 2060,821 2080,828 2130,835 2150,826 2180,818 2200,803 2220,813 2235,796 2255,766 2280,768 2310,757 2330,765 2350,785 2370,795 2380,810 2400,796 2430,794 2470,775 2490,752 2520,736 2545,738 2560,733 2595,736 2610,755 2630,788 2650,793 2705,783');
line(kd, '#f00', '12,778 45,792 75,803 100,797 140,778 180,766 205,763 240,775 290,802 330,817 365,821 400,816 430,803 470,770 492,760 530,766 610,764 650,767 690,778 760,779 790,793 815,802 850,799 880,793 930,795 970,806 1050,814 1085,806 1115,815 1150,818 1200,808 1250,795 1300,778 1340,752 1390,737 1440,730 1450,735 1490,745 1520,739 1600,737 1650,739 1690,753 1740,772 1790,803 1820,818 1860,818 1920,820 1950,804 1970,792 1990,791 2040,810 2110,825 2180,826 2230,812 2260,791 2300,778 2330,769 2350,773 2385,791 2440,793 2480,780 2520,758 2560,744 2597,738 2620,757 2650,775 2705,782');
```
